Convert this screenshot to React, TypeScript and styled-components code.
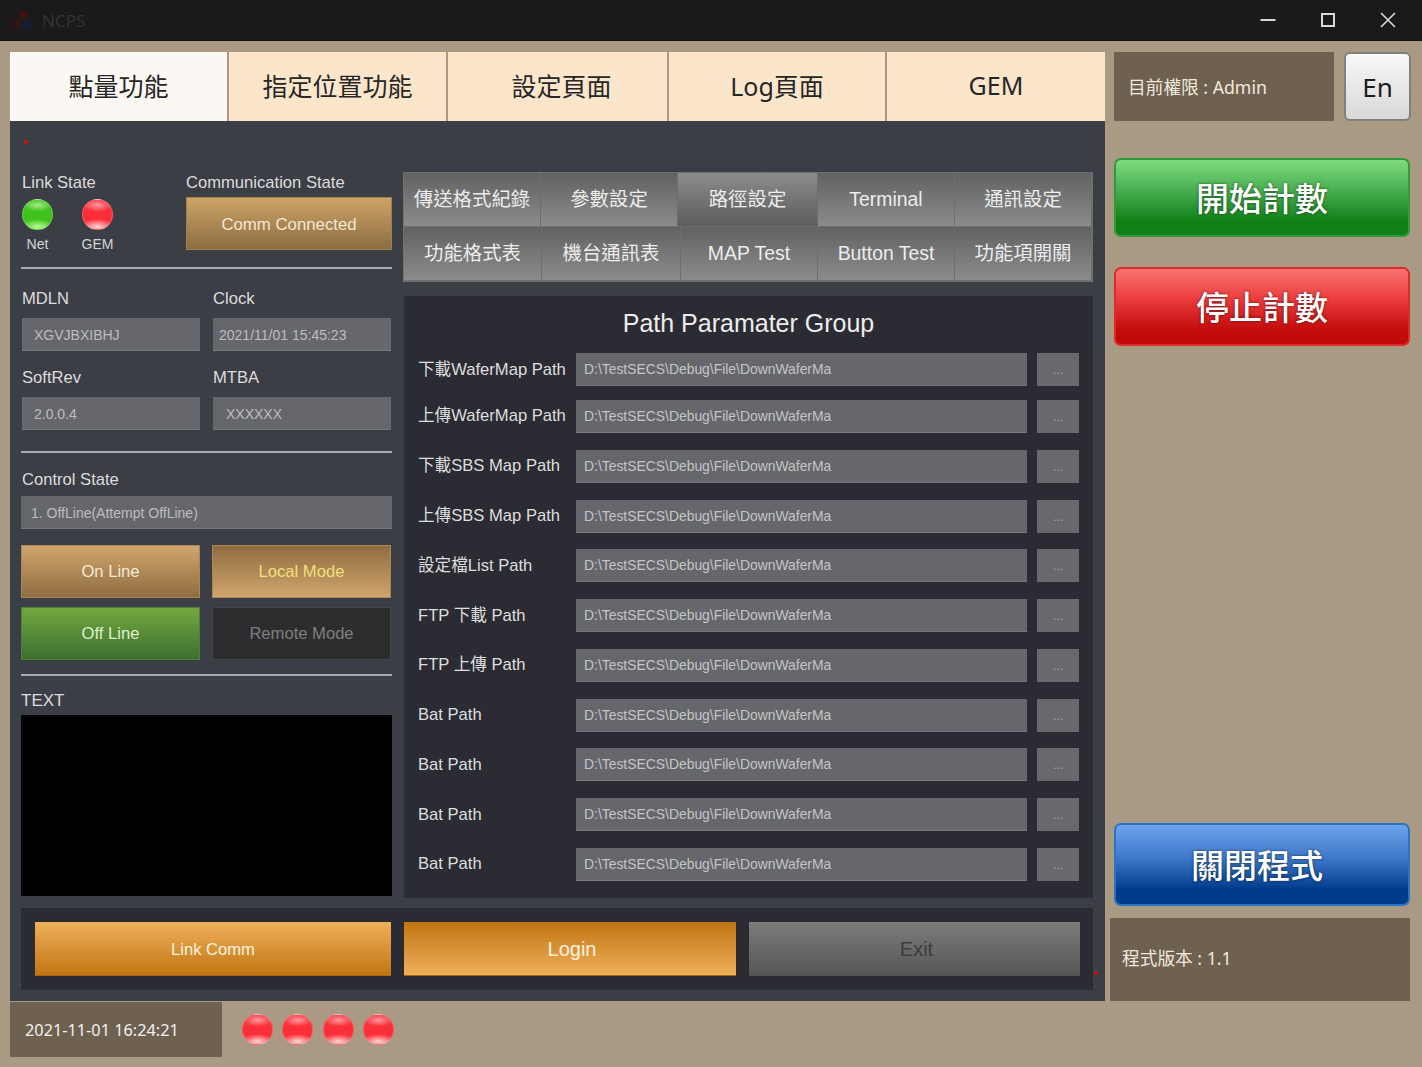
import styled, { createGlobalStyle } from "styled-components";

const sans = `"Liberation Sans", "Noto Sans CJK TC", sans-serif`;
const noto = `"Noto Sans", "Noto Sans CJK TC", sans-serif`;

const GlobalStyle = createGlobalStyle`
	html, body {
		margin: 0;
		padding: 0;
		background: #aa9a84;
	}
	* {
		box-sizing: border-box;
	}
`;

const Page = styled.div`
	display: flex;
	flex-direction: column;
	width: 1422px;
	height: 1067px;
	overflow: hidden;
	background: #aa9a84;
	font-family: ${sans};
`;

const TitleBar = styled.div`
	display: flex;
	align-items: center;
	flex: 0 0 41px;
	padding: 0 4px 0 12px;
	background: #1a1a1a;
	border-bottom: 1px solid #111;
`;

const AppName = styled.span`
	margin-left: 8px;
	font-family: ${noto};
	font-size: 17px;
	color: #343434;
`;

const WindowControls = styled.div`
	display: flex;
	margin-left: auto;
`;

const WindowButton = styled.div`
	display: flex;
	align-items: center;
	justify-content: center;
	width: 60px;
	height: 40px;
`;

const Workspace = styled.div`
	display: flex;
	gap: 9px;
	padding: 11px 0 0 10px;
`;

const MainColumn = styled.div`
	display: flex;
	flex-direction: column;
	width: 1095px;
`;

const TopTabs = styled.div`
	display: grid;
	grid-template-columns: 217px 217px 219px 216px 218px;
	gap: 2px;
	height: 69px;
`;

const TopTab = styled.div<{ $active?: boolean; $nudge?: number }>`
	display: flex;
	align-items: center;
	justify-content: center;
	padding-bottom: 3px;
	padding-left: ${(p) => p.$nudge ?? 0}px;
	background: ${(p) => (p.$active ? "#fbf8f3" : "#fbe6cc")};
	font-family: ${noto};
	font-size: 25px;
	color: #262626;
`;

const Panel = styled.div`
	position: relative;
	display: flex;
	flex-direction: column;
	height: 880px;
	padding: 51px 12px 11px 11px;
	background: #3c3e46;
`;

const Marker = styled.i<{ $side: "top" | "bottom" }>`
	position: absolute;
	width: 4px;
	height: 4px;
	background: #d01018;
	border-radius: 50%;
	${(p) =>
		p.$side === "top" ? "left: 14px; top: 19px;" : "right: 7px; bottom: 26px;"}
`;

const Upper = styled.div`
	display: flex;
	gap: 11px;
	height: 726px;
`;

const LeftColumn = styled.div`
	display: flex;
	flex-direction: column;
	width: 371px;
`;

const RightColumn = styled.div`
	display: flex;
	flex-direction: column;
	width: 690px;
`;

const Label = styled.div`
	height: 20px;
	font-size: 16.6px;
	line-height: 22px;
	color: #dcdcdc;
	white-space: nowrap;
`;

const StateRow = styled.div`
	display: grid;
	grid-template-columns: 164px 1fr;
	height: 78px;
	padding-left: 1px;
`;

const LedRow = styled.div`
	display: flex;
	gap: 29px;
	margin-top: 7px;
`;

const LedItem = styled.div`
	display: flex;
	flex-direction: column;
	align-items: center;
	width: 31px;
	gap: 6px;
`;

const Led = styled.div<{ $color: "red" | "green" }>`
	flex: none;
	width: 31px;
	height: 31px;
	border-radius: 50%;
	border: 1px solid rgba(255, 255, 255, 0.18);
	background: ${(p) =>
		p.$color === "red"
			? "radial-gradient(ellipse 60% 26% at 50% 92%, rgba(255,225,225,.95), transparent 100%), radial-gradient(ellipse 50% 22% at 50% 18%, rgba(255,190,190,.75), transparent 100%), #fb2f3a"
			: "radial-gradient(ellipse 60% 26% at 50% 92%, rgba(190,255,150,.95), transparent 100%), radial-gradient(ellipse 50% 22% at 50% 18%, rgba(210,255,190,.7), transparent 100%), #40c21c"};
`;

const LedName = styled.span`
	font-size: 14px;
	line-height: 16px;
	color: #d4d4d4;
`;

const CommButton = styled.div`
	display: flex;
	align-items: center;
	justify-content: center;
	height: 53px;
	margin-top: 5px;
	padding-top: 2px;
	border: 1px solid #a0804f;
	background: linear-gradient(#cca468, #8d6c40);
	font-size: 16.8px;
	color: #f3e8d6;
`;

const Rule = styled.hr<{ $mt: number; $mb: number }>`
	width: 100%;
	height: 2px;
	margin: ${(p) => p.$mt}px 0 ${(p) => p.$mb}px;
	border: 0;
	background: #a8a9ad;
`;

const FieldGrid = styled.div`
	display: grid;
	grid-template-columns: 178px 178px;
	column-gap: 13px;
	padding: 0 1px;
`;

const Field = styled.div<{ $top?: number }>`
	display: flex;
	flex-direction: column;
	gap: 10px;
	margin-top: ${(p) => p.$top ?? 0}px;
`;

const ValueBox = styled.div<{ $inset: number }>`
	display: flex;
	align-items: center;
	height: 33px;
	padding: 1px 0 0 ${(p) => p.$inset}px;
	background: #66676c;
	border-bottom: 1px solid #76777b;
	font-size: 14px;
	color: #bdbdbd;
	white-space: nowrap;
`;

const ControlLabel = styled(Label)`
	margin-bottom: 7px;
	padding-left: 1px;
`;

const ModeGrid = styled.div`
	display: grid;
	grid-template-columns: 179px 179px;
	grid-auto-rows: 53px;
	gap: 9px 12px;
	margin-top: 16px;
`;

const ModeButton = styled.div<{
	$tone: "tan" | "tanOn" | "green" | "dark";
}>`
	display: flex;
	align-items: center;
	justify-content: center;
	font-size: 16.6px;
	border: 1px solid
		${(p) =>
			p.$tone === "green"
				? "#4f8237"
				: p.$tone === "dark"
					? "#45464b"
					: "#a8865a"};
	background: ${(p) =>
		p.$tone === "tan"
			? "linear-gradient(#cfa56c, #8f6d41)"
			: p.$tone === "tanOn"
				? "linear-gradient(#8f6d41, #cfa56c)"
				: p.$tone === "green"
					? "linear-gradient(#73a83f, #3c6f30)"
					: "#2d2d30"};
	color: ${(p) =>
		p.$tone === "tan"
			? "#f5ead6"
			: p.$tone === "tanOn"
				? "#f0e07c"
				: p.$tone === "green"
					? "#dff0cf"
					: "#7e7e7e"};
`;

const TextLabel = styled(Label)`
	margin-bottom: 5px;
	font-size: 17px;
`;

const TextArea = styled.div`
	height: 181px;
	background: #000;
`;

const SubTabs = styled.div`
	display: flex;
	flex-direction: column;
	height: 110px;
	border: 1px solid #6f7073;
`;

const SubTabRow = styled.div<{ $cols: string }>`
	display: grid;
	flex: 1;
	grid-template-columns: ${(p) => p.$cols};
`;

const SubTab = styled.div<{ $active?: boolean }>`
	display: flex;
	align-items: center;
	justify-content: center;
	padding-bottom: 1px;
	border-right: 1px solid #6e6e6e;
	border-bottom: 1px solid #6e6e6e;
	background: ${(p) =>
		p.$active
			? "linear-gradient(#8c8c8c, #5c5c5c)"
			: "linear-gradient(#626262, #8b8b8b)"};
	font-family: ${sans};
	font-size: 19.4px;
	line-height: 24px;
	color: #ececec;
	white-space: nowrap;
`;

const PathPanel = styled.div`
	display: flex;
	flex-direction: column;
	flex: 1;
	margin: 14px 0 0 1px;
	padding: 10px 0 17px;
	background: #2b2c33;
`;

const PathTitle = styled.div`
	height: 34px;
	margin-bottom: 13px;
	font-size: 25px;
	line-height: 34px;
	text-align: center;
	color: #ededed;
`;

const PathRows = styled.div`
	display: flex;
	flex-direction: column;
	flex: 1;
	justify-content: space-between;
`;

const PathRow = styled.div`
	display: grid;
	grid-template-columns: 158px 451px 42px;
	align-items: center;
	height: 33px;
	padding-left: 14px;

	&:first-child {
		margin-bottom: -2.8px;
	}
`;

const PathLabel = styled.span`
	font-size: 16.6px;
	line-height: 20px;
	height: 20px;
	color: #dedede;
	white-space: nowrap;
`;

const PathValue = styled.div`
	display: flex;
	align-items: center;
	height: 33px;
	padding-left: 8px;
	background: #66676c;
	border-bottom: 1px solid #77787c;
	font-size: 13.9px;
	color: #c4c4c4;
	white-space: nowrap;
`;

const BrowseButton = styled.div`
	display: flex;
	align-items: center;
	justify-content: center;
	width: 42px;
	height: 33px;
	margin-left: 10px;
	padding-top: 1px;
	background: #68696d;
	font-size: 12px;
	color: #a9a9a9;
`;

const BottomBar = styled.div`
	display: grid;
	grid-template-columns: 356px 332px 331px;
	column-gap: 13px;
	height: 82px;
	margin-top: 10px;
	padding: 14px 13px 14px 14px;
	background: #2b2c33;
`;

const ActionButton = styled.div<{ $tone: "orange" | "orangeOn" | "grey" }>`
	display: flex;
	align-items: center;
	justify-content: center;
	padding-top: 2px;
	padding-left: ${(p) => (p.$tone === "orange" ? "0" : "4px")};
	border-bottom: 1px solid ${(p) => (p.$tone === "grey" ? "#505054" : "#a86410")};
	background: ${(p) =>
		p.$tone === "orange"
			? "linear-gradient(#efb05a, #c07513)"
			: p.$tone === "orangeOn"
				? "linear-gradient(#c07513, #efb05a)"
				: "linear-gradient(#7c7c7c, #565656)"};
	font-size: ${(p) => (p.$tone === "orange" ? "16.6px" : "20px")};
	color: ${(p) => (p.$tone === "grey" ? "#3c3c3e" : "#fdf2e0")};
`;

const StatusBar = styled.div`
	display: flex;
	align-items: center;
	height: 55px;
	margin-top: 1px;
`;

const Clock = styled.div`
	display: flex;
	align-items: center;
	width: 212px;
	height: 55px;
	padding-left: 15px;
	background: #6f6150;
	font-family: ${noto};
	font-size: 16.3px;
	color: #f0f0f0;
`;

const StatusLeds = styled.div`
	display: flex;
	gap: 9.4px;
	margin-left: 20px;
`;

const SideColumn = styled.div`
	display: flex;
	flex-direction: column;
	width: 296px;
	height: 949px;
`;

const SideTop = styled.div`
	display: flex;
	gap: 10px;
	height: 69px;
`;

const InfoBox = styled.div<{ $wide?: boolean }>`
	display: flex;
	align-items: center;
	flex: none;
	width: ${(p) => (p.$wide ? "300px" : "220px")};
	height: ${(p) => (p.$wide ? "83px" : "69px")};
	margin-left: ${(p) => (p.$wide ? "-4px" : "0")};
	margin-top: ${(p) => (p.$wide ? "12px" : "0")};
	padding-left: ${(p) => (p.$wide ? "12px" : "14px")};
	padding-bottom: ${(p) => (p.$wide ? "6px" : "2px")};
	background: #6f6150;
	font-family: ${noto};
	font-size: 17.7px;
	color: #efe9df;
`;

const LangButton = styled.div`
	display: flex;
	align-items: center;
	justify-content: center;
	flex: none;
	width: 67px;
	height: 69px;
	border: 2px solid #83807c;
	border-radius: 6px;
	background: linear-gradient(#f8f8f8, #d8d8d8);
	font-family: ${noto};
	font-size: 26px;
	color: #1d1d1d;
`;

const BigButton = styled.div<{ $tone: "green" | "red" | "blue" }>`
	display: flex;
	align-items: center;
	justify-content: center;
	height: ${(p) => (p.$tone === "blue" ? "83px" : "79px")};
	margin-top: ${(p) =>
		p.$tone === "green" ? "37px" : p.$tone === "red" ? "30px" : "auto"};
	padding-right: ${(p) => (p.$tone === "blue" ? "10px" : "0")};
	padding-bottom: 2px;
	border-radius: 7px;
	border: 2px solid
		${(p) =>
			p.$tone === "green"
				? "#2f9a3c"
				: p.$tone === "red"
					? "#e02a2a"
					: "#2a74c8"};
	background: ${(p) =>
		p.$tone === "green"
			? "linear-gradient(#7fdc7f 0%, #46ad4e 42%, #107f17 82%, #118019 100%)"
			: p.$tone === "red"
				? "linear-gradient(#fb7373 0%, #ea3a3a 42%, #c20a0a 82%, #c00a0a 100%)"
				: "linear-gradient(#6ea4ee 0%, #3e78c8 42%, #003a8a 82%, #003a8a 100%)"};
	font-family: ${noto};
	font-size: 33px;
	font-weight: 500;
	color: #fff;
	text-shadow: 0 0 3px rgba(0, 0, 0, 0.6);
`;

const mainTabs = ["點量功能", "指定位置功能", "設定頁面", "Log頁面", "GEM"];

const subTabsTop = ["傳送格式紀錄", "參數設定", "路徑設定", "Terminal", "通訊設定"];
const subTabsBottom = ["功能格式表", "機台通訊表", "MAP Test", "Button Test", "功能項開關"];

const pathLabels = [
	"下載WaferMap Path",
	"上傳WaferMap Path",
	"下載SBS Map Path",
	"上傳SBS Map Path",
	"設定檔List Path",
	"FTP 下載 Path",
	"FTP 上傳 Path",
	"Bat Path",
	"Bat Path",
	"Bat Path",
	"Bat Path",
];

const PATH_VALUE = "D:\\TestSECS\\Debug\\File\\DownWaferMa";

function AppLogo() {
	return (
		<svg width="22" height="22" viewBox="0 0 22 22">
			<circle cx="11" cy="6" r="4.5" fill="#3c1212" />
			<circle cx="6" cy="15" r="5" fill="#331414" />
			<circle cx="15" cy="16" r="5" fill="#121e36" />
		</svg>
	);
}

function WindowIcon({ kind }: { kind: "min" | "max" | "close" }) {
	return (
		<svg width="18" height="18" viewBox="0 0 18 18" fill="none" stroke="#d8d8d8" strokeWidth="2">
			{kind === "min" && <path d="M1.5 9H16.5" />}
			{kind === "max" && <rect x="3" y="3" width="12" height="12" />}
			{kind === "close" && <path d="M2 2L16 16M16 2L2 16" strokeWidth="1.6" />}
		</svg>
	);
}

export default function App() {
	return (
		<Page>
			<GlobalStyle />
			<TitleBar>
				<AppLogo />
				<AppName>NCPS</AppName>
				<WindowControls>
					<WindowButton>
						<WindowIcon kind="min" />
					</WindowButton>
					<WindowButton>
						<WindowIcon kind="max" />
					</WindowButton>
					<WindowButton>
						<WindowIcon kind="close" />
					</WindowButton>
				</WindowControls>
			</TitleBar>

			<Workspace>
				<MainColumn>
					<TopTabs>
						{mainTabs.map((name, i) => (
							<TopTab key={name} $active={i === 0} $nudge={i === 2 ? 8 : 0}>
								{name}
							</TopTab>
						))}
					</TopTabs>

					<Panel>
						<Marker $side="top" />
						<Marker $side="bottom" />
						<Upper>
							<LeftColumn>
								<StateRow>
									<div>
										<Label>Link State</Label>
										<LedRow>
											<LedItem>
												<Led $color="green" />
												<LedName>Net</LedName>
											</LedItem>
											<LedItem>
												<Led $color="red" />
												<LedName>GEM</LedName>
											</LedItem>
										</LedRow>
									</div>
									<div>
										<Label>Communication State</Label>
										<CommButton>Comm Connected</CommButton>
									</div>
								</StateRow>
								<Rule $mt={17} $mb={19} />
								<FieldGrid>
									<Field>
										<Label>MDLN</Label>
										<ValueBox $inset={12}>XGVJBXIBHJ</ValueBox>
									</Field>
									<Field>
										<Label>Clock</Label>
										<ValueBox $inset={6}>2021/11/01 15:45:23</ValueBox>
									</Field>
									<Field $top={16}>
										<Label>SoftRev</Label>
										<ValueBox $inset={12}>2.0.0.4</ValueBox>
									</Field>
									<Field $top={16}>
										<Label>MTBA</Label>
										<ValueBox $inset={13}>XXXXXX</ValueBox>
									</Field>
								</FieldGrid>
								<Rule $mt={21} $mb={16} />
								<ControlLabel>Control State</ControlLabel>
								<ValueBox $inset={10}>1. OffLine(Attempt OffLine)</ValueBox>
								<ModeGrid>
									<ModeButton $tone="tan">On Line</ModeButton>
									<ModeButton $tone="tanOn">Local Mode</ModeButton>
									<ModeButton $tone="green">Off Line</ModeButton>
									<ModeButton $tone="dark">Remote Mode</ModeButton>
								</ModeGrid>
								<Rule $mt={14} $mb={14} />
								<TextLabel>TEXT</TextLabel>
								<TextArea />
							</LeftColumn>

							<RightColumn>
								<SubTabs>
									<SubTabRow $cols="137px 137px 140px 137px 1fr">
										{subTabsTop.map((name, i) => (
											<SubTab key={name} $active={i === 2}>
												{name}
											</SubTab>
										))}
									</SubTabRow>
									<SubTabRow $cols="138px 139px 137px 137px 1fr">
										{subTabsBottom.map((name) => (
											<SubTab key={name}>{name}</SubTab>
										))}
									</SubTabRow>
								</SubTabs>

								<PathPanel>
									<PathTitle>Path Paramater Group</PathTitle>
									<PathRows>
										{pathLabels.map((label, i) => (
											<PathRow key={i}>
												<PathLabel>{label}</PathLabel>
												<PathValue>{PATH_VALUE}</PathValue>
												<BrowseButton>...</BrowseButton>
											</PathRow>
										))}
									</PathRows>
								</PathPanel>
							</RightColumn>
						</Upper>

						<BottomBar>
							<ActionButton $tone="orange">Link Comm</ActionButton>
							<ActionButton $tone="orangeOn">Login</ActionButton>
							<ActionButton $tone="grey">Exit</ActionButton>
						</BottomBar>
					</Panel>

					<StatusBar>
						<Clock>2021-11-01 16:24:21</Clock>
						<StatusLeds>
							{[0, 1, 2, 3].map((i) => (
								<Led key={i} $color="red" />
							))}
						</StatusLeds>
					</StatusBar>
				</MainColumn>

				<SideColumn>
					<SideTop>
						<InfoBox>目前權限 : Admin</InfoBox>
						<LangButton>En</LangButton>
					</SideTop>
					<BigButton $tone="green">開始計數</BigButton>
					<BigButton $tone="red">停止計數</BigButton>
					<BigButton $tone="blue">關閉程式</BigButton>
					<InfoBox $wide>程式版本 : 1.1</InfoBox>
				</SideColumn>
			</Workspace>
		</Page>
	);
}
